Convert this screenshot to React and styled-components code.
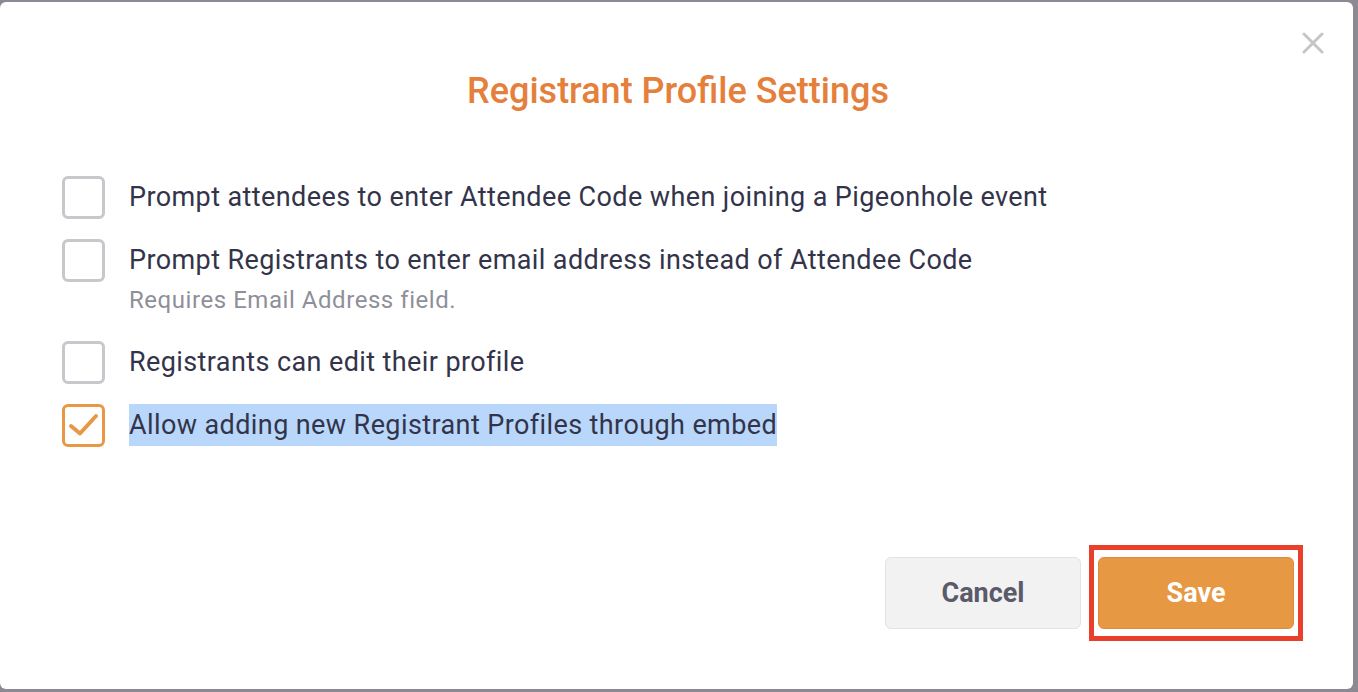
import React from "react";
import styled, { createGlobalStyle } from "styled-components";

const Global = createGlobalStyle`
  html, body { margin: 0; padding: 0; }
  body {
    background: #8c8993;
    font-family: Roboto, "Noto Sans", "Liberation Sans", sans-serif;
    width: 1358px;
    height: 692px;
    overflow: hidden;
  }
`;

const Backdrop = styled.div`
  box-sizing: border-box;
  width: 1358px;
  height: 692px;
  padding: 2px 5px 3px 0;
`;

const Modal = styled.div`
  position: relative;
  box-sizing: border-box;
  height: 100%;
  background: #ffffff;
  border-radius: 6px;
  display: flex;
  flex-direction: column;
  padding: 0 59px 0 62px;
`;

const Close = styled.button`
  position: absolute;
  top: 27px;
  right: 26px;
  width: 28px;
  height: 28px;
  padding: 0;
  border: none;
  background: transparent;
  display: flex;
  align-items: center;
  justify-content: center;
  cursor: pointer;
`;

const Title = styled.h2`
  margin: 67px 0 0;
  text-align: center;
  font-size: 36px;
  line-height: 44px;
  font-weight: 500;
  color: #e5803c;
`;

const List = styled.div`
  margin-top: 63px;
  display: flex;
  flex-direction: column;
  gap: 20px;
`;

const Row = styled.label`
  display: flex;
  align-items: flex-start;
  gap: 24px;
`;

const Box = styled.span`
  box-sizing: border-box;
  flex: none;
  width: 43px;
  height: 43px;
  border: 3px solid ${(p) => (p.$checked ? "#e89845" : "#c8c7cc")};
  border-radius: 6px;
  display: flex;
  align-items: center;
  justify-content: center;
  background: #fff;
`;

const TextCol = styled.span`
  display: flex;
  flex-direction: column;
`;

const Label = styled.span`
  font-size: 27px;
  letter-spacing: 0.4px;
  line-height: 42px;
  color: #33344a;
  background: ${(p) => (p.$selected ? "#b9d7fb" : "transparent")};
  align-self: flex-start;
`;

const Hint = styled.span`
  font-size: 24px;
  letter-spacing: 0.55px;
  line-height: 32px;
  color: #8f8f9a;
  margin: 3px 0 5px;
`;

const Footer = styled.div`
  margin-top: auto;
  margin-bottom: 48px;
  margin-right: -9px;
  display: flex;
  align-items: center;
  justify-content: flex-end;
  gap: 8px;
`;

const Button = styled.button`
  box-sizing: border-box;
  width: 196px;
  height: 72px;
  border-radius: 6px;
  font-family: inherit;
  font-size: 27px;
  font-weight: 700;
  cursor: pointer;
  border: 1px solid ${(p) => (p.$primary ? "#de8a42" : "#e3e3e3")};
  background: ${(p) => (p.$primary ? "#e79843" : "#f2f2f2")};
  color: ${(p) => (p.$primary ? "#ffffff" : "#5a5a68")};
`;

const Highlight = styled.span`
  display: inline-flex;
  border: 5px solid #e8402b;
  padding: 7px 4px;
`;

const items = [
  { text: "Prompt attendees to enter Attendee Code when joining a Pigeonhole event" },
  {
    text: "Prompt Registrants to enter email address instead of Attendee Code",
    hint: "Requires Email Address field.",
  },
  { text: "Registrants can edit their profile" },
  { text: "Allow adding new Registrant Profiles through embed", checked: true, selected: true },
];

export default function App() {
  return (
    <>
      <Global />
      <Backdrop>
        <Modal>
          <Close aria-label="Close">
            <svg width="22" height="22" viewBox="0 0 22 22">
              <path d="M2 2 L20 20 M20 2 L2 20" stroke="#c6c6c6" strokeWidth="3" strokeLinecap="round" />
            </svg>
          </Close>
          <Title>Registrant Profile Settings</Title>
          <List>
            {items.map((it, i) => (
              <Row key={i}>
                <Box $checked={it.checked}>
                  {it.checked && (
                    <svg width="37" height="37" viewBox="0 0 37 37">
                      <path d="M6 19 L15 26.5 L31 9" fill="none" stroke="#e89845" strokeWidth="4" strokeLinecap="round" strokeLinejoin="round" />
                    </svg>
                  )}
                </Box>
                <TextCol>
                  <Label $selected={it.selected}>{it.text}</Label>
                  {it.hint && <Hint>{it.hint}</Hint>}
                </TextCol>
              </Row>
            ))}
          </List>
          <Footer>
            <Button>Cancel</Button>
            <Highlight>
              <Button $primary>Save</Button>
            </Highlight>
          </Footer>
        </Modal>
      </Backdrop>
    </>
  );
}
